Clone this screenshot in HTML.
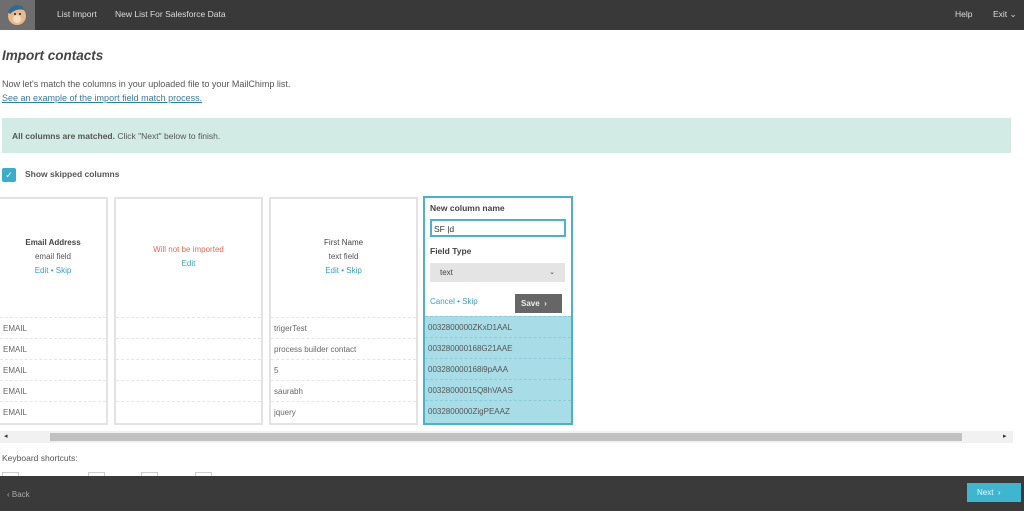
<!DOCTYPE html>
<html><head><style>
*{box-sizing:border-box;margin:0;padding:0}
body{width:1024px;height:511px;overflow:hidden;background:#fff;font-family:"Liberation Sans",sans-serif;color:#555;position:relative;font-size:9px}
.a{position:absolute}
.top{left:0;top:0;width:1024px;height:30px;background:#393939}
.logo{left:0;top:0;width:35px;height:30px;background:#6e6e6e}
.nav{color:#ddd;font-size:8.5px;top:9px}
.col{border:2px solid #e3e3e3;background:#fff}
.row{position:absolute;left:0;right:0;height:21px;border-top:1px dashed #e6e6e6;font-size:8px;padding:6px 0 0 3px;color:#666}
.lk{color:#3a9fbf}
.c{text-align:center;font-size:8px;position:absolute;left:0;right:0}
</style></head><body>
<div class="a top"></div>
<div class="a logo"><svg width="35" height="30"><circle cx="17" cy="16" r="9" fill="#e8b98a"/><path d="M8 12 Q12 3 22 6 L24 10 Q16 8 10 14Z" fill="#2a6c96"/><circle cx="17" cy="19" r="4" fill="#f3dcc2"/><circle cx="15" cy="14" r="1" fill="#222"/><circle cx="20" cy="14" r="1" fill="#222"/></svg></div>
<div class="a nav" style="left:57px">List Import</div>
<div class="a nav" style="left:115px">New List For Salesforce Data</div>
<div class="a nav" style="left:955px">Help</div>
<div class="a nav" style="left:993px">Exit ⌄</div>
<div class="a" style="left:2px;top:48px;font-size:13.5px;font-style:italic;font-weight:bold;color:#454545">Import contacts</div>
<div class="a" style="left:2px;top:79px;font-size:9px">Now let's match the columns in your uploaded file to your MailChimp list.</div>
<div class="a" style="left:2px;top:93px;font-size:9px;color:#2f7fa0;text-decoration:underline">See an example of the import field match process.</div>
<div class="a" style="left:2px;top:118px;width:1009px;height:35px;background:#d3ebe5;font-size:8.5px;padding:13px 10px;color:#555"><b>All columns are matched.</b> Click "Next" below to finish.</div>
<div class="a" style="left:2px;top:168px;width:14px;height:14px;background:#3aadca;border-radius:2px;color:#fff;font-size:9px;text-align:center;line-height:14px">✓</div>
<div class="a" style="left:25px;top:169px;font-size:8.5px;font-weight:bold;color:#555">Show skipped columns</div>

<div class="a col" style="left:-2px;top:197px;width:110px;height:228px">
<div class="c" style="top:39px;font-weight:bold;color:#444">Email Address</div>
<div class="c" style="top:53px">email field</div>
<div class="c lk" style="top:67px">Edit • Skip</div>
<div class="row" style="top:118px">EMAIL</div><div class="row" style="top:139px">EMAIL</div><div class="row" style="top:160px">EMAIL</div><div class="row" style="top:181px">EMAIL</div><div class="row" style="top:202px">EMAIL</div>
</div>
<div class="a col" style="left:114px;top:197px;width:149px;height:228px">
<div class="c" style="top:46px;color:#f0665a">Will not be imported</div>
<div class="c lk" style="top:60px">Edit</div>
<div class="row" style="top:118px"></div><div class="row" style="top:139px"></div><div class="row" style="top:160px"></div><div class="row" style="top:181px"></div><div class="row" style="top:202px"></div>
</div>
<div class="a col" style="left:269px;top:197px;width:149px;height:228px">
<div class="c" style="top:39px;color:#444">First Name</div>
<div class="c" style="top:53px">text field</div>
<div class="c lk" style="top:67px">Edit • Skip</div>
<div class="row" style="top:118px">trigerTest</div><div class="row" style="top:139px">process builder contact</div><div class="row" style="top:160px">5</div><div class="row" style="top:181px">saurabh</div><div class="row" style="top:202px">jquery</div>
</div>
<div class="a col" style="left:423px;top:196px;width:150px;height:229px;border-color:#49b3cf">
<div class="a" style="left:5px;top:5px;font-size:8.5px;font-weight:bold;color:#444">New column name</div>
<div class="a" style="left:5px;top:21px;width:136px;height:18px;border:2px solid #49b3cf;font-size:8.5px;padding:3px 2px;color:#333">SF |d</div>
<div class="a" style="left:5px;top:48px;font-size:8.5px;font-weight:bold;color:#444">Field Type</div>
<div class="a" style="left:5px;top:65px;width:135px;height:19px;background:#e4e4e4;font-size:8px;padding:5px 10px;color:#444">text<span style="float:right;font-size:7px">⌄</span></div>
<div class="a lk" style="left:5px;top:99px;font-size:8px">Cancel • Skip</div>
<div class="a" style="left:90px;top:96px;width:47px;height:19px;background:#666;color:#eee;font-size:8px;font-weight:bold;padding:5px 6px">Save &nbsp;›</div>
<div class="a" style="left:0;right:0;top:118px;bottom:0;background:#a8dde7"></div>
<div class="row" style="top:118px;color:#555;border-color:#8ccbd8">0032800000ZKxD1AAL</div><div class="row" style="top:139px;color:#555;border-color:#8ccbd8">003280000168G21AAE</div><div class="row" style="top:160px;color:#555;border-color:#8ccbd8">003280000168i9pAAA</div><div class="row" style="top:181px;color:#555;border-color:#8ccbd8">00328000015Q8hVAAS</div><div class="row" style="top:202px;color:#555;border-color:#8ccbd8">0032800000ZigPEAAZ</div>
</div>

<div class="a" style="left:0;top:431px;width:1013px;height:12px;background:#f1f1f1"></div>
<div class="a" style="left:50px;top:433px;width:912px;height:8px;background:#c1c1c1"></div>
<div class="a" style="left:4px;top:432px;font-size:7px;color:#333">◂</div>
<div class="a" style="left:1003px;top:432px;font-size:7px;color:#333">▸</div>
<div class="a" style="left:2px;top:453px;font-size:8.5px">Keyboard shortcuts:</div>
<div class="a" style="left:2px;top:472px;width:17px;height:6px;border:1px solid #ccc"></div>
<div class="a" style="left:88px;top:472px;width:17px;height:6px;border:1px solid #ccc"></div>
<div class="a" style="left:141px;top:472px;width:17px;height:6px;border:1px solid #ccc"></div>
<div class="a" style="left:195px;top:472px;width:17px;height:6px;border:1px solid #ccc"></div>
<div class="a" style="left:0;top:476px;width:1024px;height:35px;background:#3a3a3a"></div>
<div class="a" style="left:7px;top:490px;font-size:8px;color:#aaa">‹ Back</div>
<div class="a" style="left:967px;top:483px;width:54px;height:19px;background:#3fb6d0;color:#e8f8fb;font-size:8px;padding:5px 10px">Next &nbsp;›</div>
</body></html>
